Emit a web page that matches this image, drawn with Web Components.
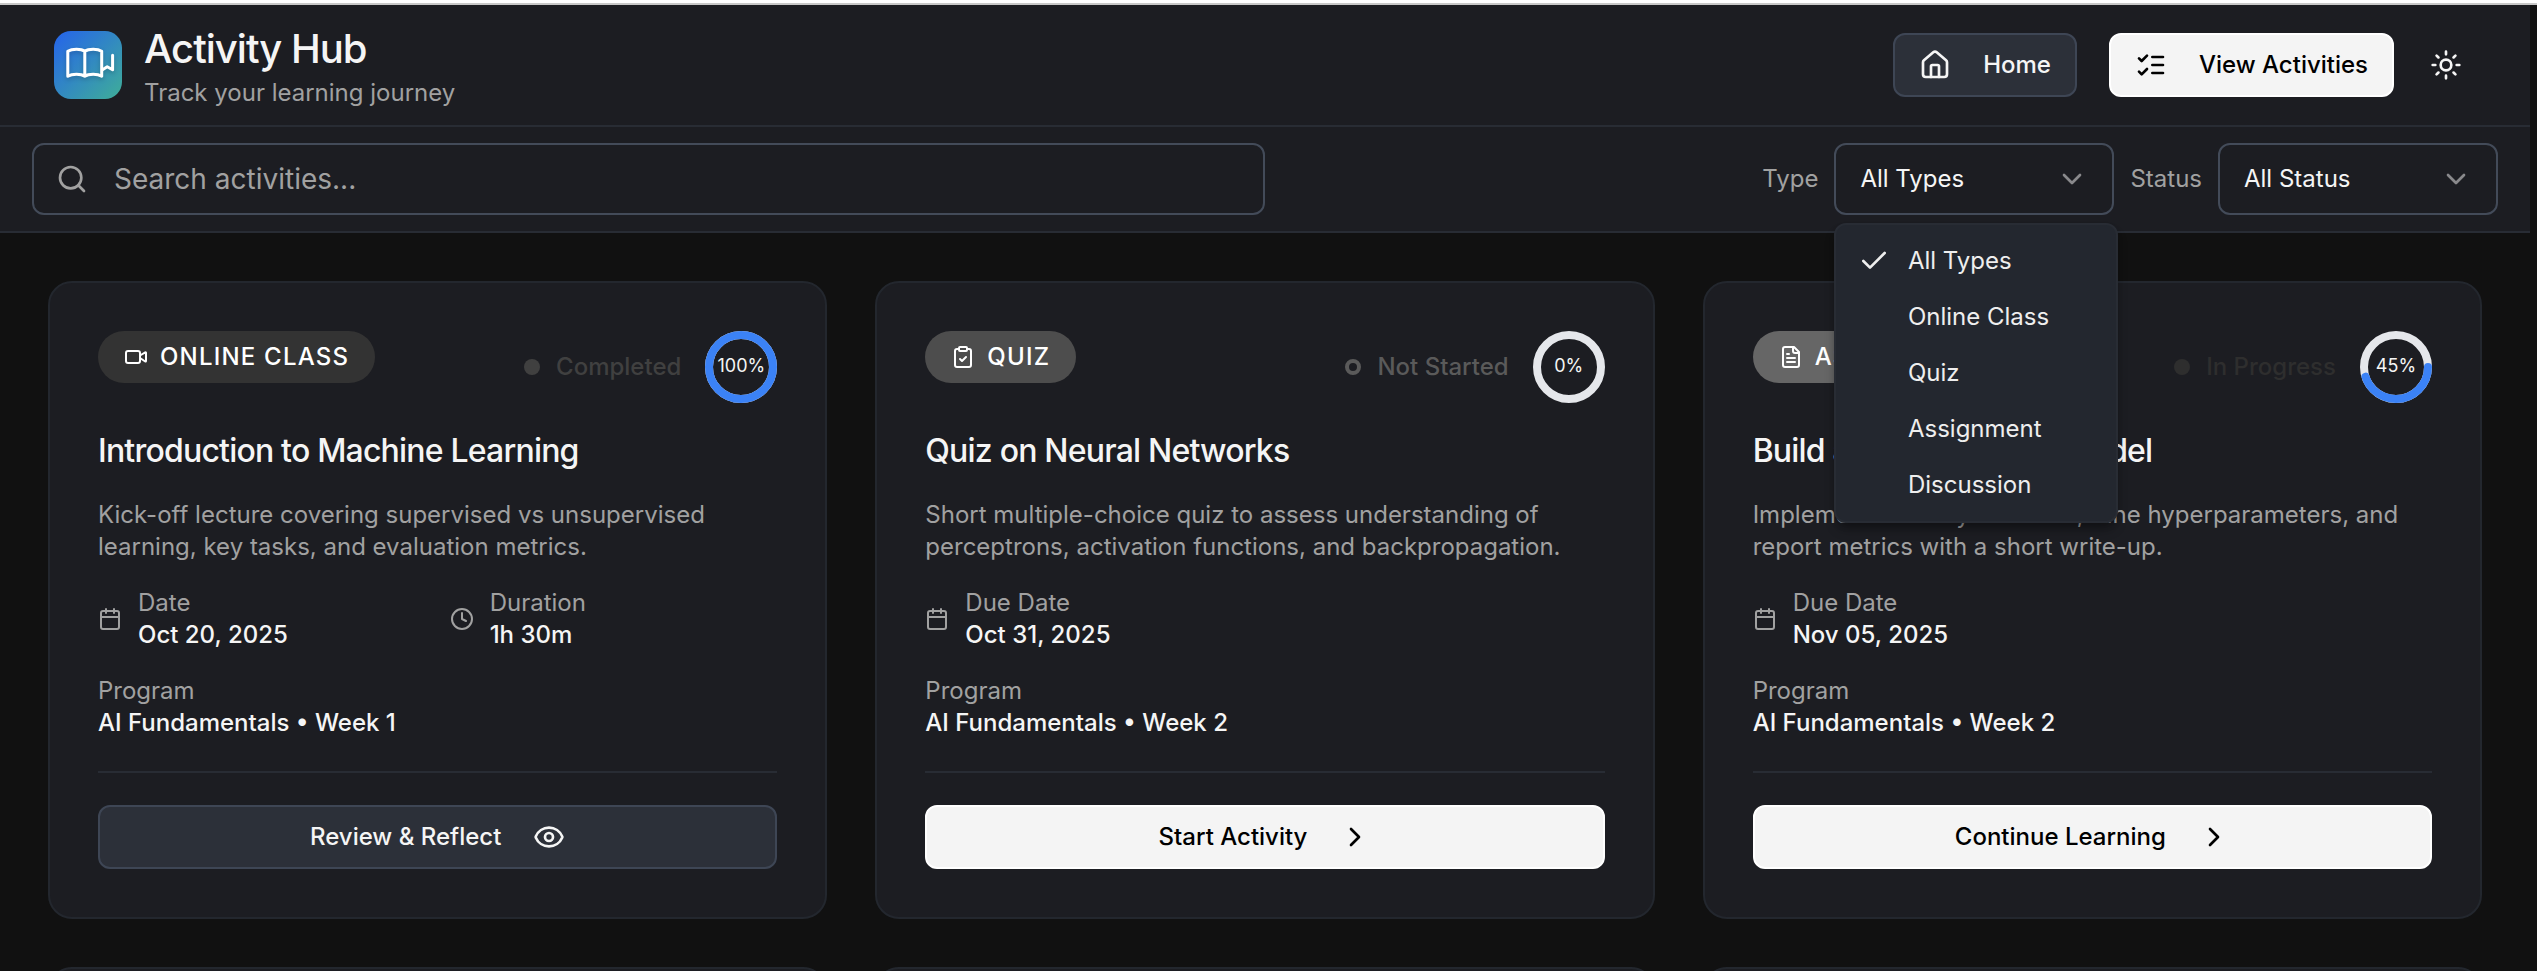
<!DOCTYPE html>
<html lang="en">
<head>
<meta charset="utf-8">
<title>Activity Hub</title>
<style>
html,body{margin:0;height:971px;overflow:hidden;background:#111;font-family:Inter,sans-serif;font-size:24px;line-height:32px;color:#f5f5f5}
</style>
</head>
<body>
<activity-hub></activity-hub>
<script>
const ICONS = {
  home:'<path d="M15 21v-8a1 1 0 0 0-1-1h-4a1 1 0 0 0-1 1v8"/><path d="M3 10a2 2 0 0 1 .709-1.528l7-5.999a2 2 0 0 1 2.582 0l7 5.999A2 2 0 0 1 21 10v9a2 2 0 0 1-2 2H5a2 2 0 0 1-2-2z"/>',
  list:'<path d="m3 17 2 2 4-4"/><path d="m3 7 2 2 4-4"/><path d="M13 6h8M13 12h8M13 18h8"/>',
  sun:'<circle cx="12" cy="12" r="4"/><path d="M12 2v2M12 20v2M4.93 4.93l1.41 1.41M17.66 17.66l1.41 1.41M2 12h2M20 12h2M6.34 17.66l-1.41 1.41M19.07 4.93l-1.41 1.41"/>',
  search:'<circle cx="11" cy="11" r="8"/><path d="m21 21-4.3-4.3"/>',
  down:'<path d="m6 9 6 6 6-6"/>',
  right:'<path d="m9 18 6-6-6-6"/>',
  check:'<path d="M20 6 9 17l-5-5"/>',
  video:'<path d="m16 13 5.223 3.482a.5.5 0 0 0 .777-.416V7.87a.5.5 0 0 0-.752-.432L16 10.5"/><rect x="2" y="6" width="14" height="12" rx="2"/>',
  clipboard:'<rect x="8" y="2" width="8" height="4" rx="1"/><path d="M16 4h2a2 2 0 0 1 2 2v14a2 2 0 0 1-2 2H6a2 2 0 0 1-2-2V6a2 2 0 0 1 2-2h2"/><path d="m9 14 2 2 4-4"/>',
  file:'<path d="M15 2H6a2 2 0 0 0-2 2v16a2 2 0 0 0 2 2h12a2 2 0 0 0 2-2V7Z"/><path d="M14 2v4a2 2 0 0 0 2 2h4M10 9H8M16 13H8M16 17H8"/>',
  calendar:'<path d="M8 2v4M16 2v4"/><rect x="3" y="4" width="18" height="18" rx="2"/><path d="M3 10h18"/>',
  clock:'<circle cx="12" cy="12" r="10"/><path d="M12 6v6l4 2"/>',
  eye:'<path d="M2.062 12.348a1 1 0 0 1 0-.696 10.75 10.75 0 0 1 19.876 0 1 1 0 0 1 0 .696 10.75 10.75 0 0 1-19.876 0"/><circle cx="12" cy="12" r="3"/>'
};
const define = (name, html) => customElements.define(name, class extends HTMLElement {
  constructor(){ super(); this.attachShadow({mode:'open'}); }
  connectedCallback(){ this.shadowRoot.innerHTML = typeof html === 'function' ? html(this) : html; }
});

define('ui-icon', el => `<style>:host{display:block;flex:none;width:${el.getAttribute('size')||32}px;height:${el.getAttribute('size')||32}px}svg{display:block;width:100%;height:100%}</style>
<svg viewBox="0 0 24 24" fill="none" stroke="currentColor" stroke-width="2" stroke-linecap="round" stroke-linejoin="round">${ICONS[el.getAttribute('name')]}</svg>`);

define('ui-button', `<style>
:host{display:flex;align-items:center;justify-content:center;gap:32px;box-sizing:border-box;height:64px;padding:0 24px;border:2px solid #3e4655;border-radius:12px;background:#2c3039;color:#f5f5f5;font-weight:500;white-space:nowrap}
:host([primary]){background:#f4f4f4;border-color:#fff;color:#000}
</style><slot></slot>`);

define('hub-logo', `<style>
:host{display:block;flex:none;width:68px;height:68px;border-radius:17px;background:linear-gradient(135deg,#2563eb,#3fae98)}
svg{display:block;filter:drop-shadow(0 2px 2px rgba(0,0,0,.2))}
</style><svg width="68" height="68" viewBox="54 31 68 68" fill="none" stroke="#fff" stroke-width="3" stroke-linecap="round" stroke-linejoin="round">
<path d="M84.8 51.3V76.2M84.8 51.3Q82 49.2 76.5 49.2 71 49.2 67.8 51.3V76.2Q71 74.2 76.5 74.2 82 74.2 84.8 76.2 87.600 74.2 93.200 74.2 98.600 74.2 101.700 76.2V51.3Q98.600 49.2 93.200 49.2 87.600 49.2 84.8 51.3"/><path d="M112.600 55.300V69.800L107.200 66.800 102.500 69.800"/></svg>`);

define('hub-header', `<style>
:host{display:flex;align-items:center;height:120px;padding:0 64px 0 54px;border-bottom:2px solid #282c34;background:#1c1d22}
.t{flex:1;margin-left:22px;padding-top:4px}
h1{margin:0 0 4px;font-size:40px;line-height:48px;font-weight:500;letter-spacing:-1px}
p{margin:0;color:#a1a1a1}
ui-button{margin-right:32px}
.sun{width:40px;display:grid;place-items:center}
</style>
<hub-logo></hub-logo><div class="t"><h1>Activity Hub</h1><p>Track your learning journey</p></div>
<ui-button><ui-icon name="home"></ui-icon><span>Home</span></ui-button>
<ui-button primary><ui-icon name="list"></ui-icon><span>View Activities</span></ui-button>
<div class="sun"><ui-icon name="sun"></ui-icon></div>`);

define('search-box', `<style>
:host{display:flex;align-items:center;box-sizing:border-box;width:50%;height:72px;padding:0 22px;gap:26px;border:2px solid #434b59;border-radius:12px;color:#a1a1a1;font-size:28px}
</style><ui-icon name="search"></ui-icon><span><slot></slot></span>`);

define('ui-select', `<style>
:host{display:flex;align-items:center;justify-content:space-between;position:relative;box-sizing:border-box;width:280px;height:72px;padding:0 24px;border:2px solid #434b59;border-radius:12px}
ui-icon{opacity:.5}
</style><span><slot></slot></span><ui-icon name="down"></ui-icon><slot name="menu"></slot>`);

define('ui-menu', `<style>
:host{position:absolute;z-index:5;left:-2px;top:78px;box-sizing:border-box;width:284px;padding:8px;border:2px solid #282c34;border-radius:12px;background:#23272f;color:#eee;box-shadow:0 8px 12px -2px rgba(0,0,0,.3),0 4px 8px -4px rgba(0,0,0,.3)}
</style><slot></slot>`);
define('ui-option', `<style>
:host{display:flex;align-items:center;height:56px;padding-left:63.5px}
:host([selected]){padding-left:14px}
ui-icon{display:none;margin-right:17.5px}
:host([selected]) ui-icon{display:block}
</style><ui-icon name="check"></ui-icon><span><slot></slot></span>`);

define('filter-bar', `<style>
:host{display:flex;align-items:center;height:104px;padding:0 32px;border-bottom:2px solid #282c34;background:#1c1d22}
.s{flex:1}.l{color:#a1a1a1;margin:0 16px}
</style>
<search-box>Search activities...</search-box><div class="s"></div>
<span class="l">Type</span>
<ui-select>All Types<ui-menu slot="menu"><ui-option selected>All Types</ui-option><ui-option>Online Class</ui-option><ui-option>Quiz</ui-option><ui-option>Assignment</ui-option><ui-option>Discussion</ui-option></ui-menu></ui-select>
<span class="l">Status</span><ui-select>All Status</ui-select>`);

define('type-badge', `<style>
:host{display:flex;align-items:center;gap:12px;box-sizing:border-box;height:52px;padding:0 26px;border-radius:26px;background:var(--badge);color:#fff;font-weight:500;letter-spacing:1.2px;white-space:nowrap}
</style><slot></slot>`);

define('progress-ring', el => { const v=+el.getAttribute('value'), c=2*Math.PI*32; return `<style>
:host{display:grid;place-items:center;flex:none;width:72px;height:72px;font-size:18px;line-height:24px;font-weight:400}
svg,span{grid-area:1/1}span{margin-top:-3px}
</style><svg width="72" height="72" fill="none" stroke-width="8"><circle cx="36" cy="36" r="32" stroke="#e5e7eb"/>${v?`<circle cx="36" cy="36" r="32" stroke="#3b82f6" stroke-linecap="round" stroke-dasharray="${c*v/100} ${c}"/>`:''}</svg><span>${v}%</span>`; });

define('meta-item', el => `<style>
:host{display:flex;align-items:center;gap:16px;color:#a1a1a1}b{display:block;font-weight:500;color:#f5f5f5}
</style>${el.getAttribute('icon')?`<ui-icon size="24" name="${el.getAttribute('icon')}"></ui-icon>`:''}<div>${el.getAttribute('label')}<b><slot></slot></b></div>`);

define('activity-card', el => { const a=n=>el.getAttribute(n); return `<style>
:host{display:block;box-sizing:border-box;height:638px;padding:48px;border:2px solid #23272e;border-radius:24px;background:#1c1d22;min-width:0}
.top{display:flex;align-items:flex-start;height:72px}
.st{display:flex;align-items:center;height:72px;margin:0 24px 0 auto;gap:16px;font-weight:500;color:${a('tone')}}
.dot{box-sizing:border-box;width:16px;height:16px;border-radius:50%;${a('value')==='0'?'border:4px solid':'background:'+a('tone')}}
h2{margin:24px 0;font-size:32px;line-height:48px;font-weight:500;letter-spacing:-.8px;white-space:nowrap}
p{margin:0;color:#a1a1a1;white-space:nowrap}
.grid{display:grid;grid-template-columns:1fr 1fr;gap:24px;margin:24px 0}
.foot{margin-top:32px;padding-top:32px;border-top:2px solid #282c34}
</style>
<div class="top"><type-badge style="--badge:${a('shade')}"><ui-icon size="24" name="${a('icon')}"></ui-icon><span>${a('kind')}</span></type-badge>
<div class="st"><i class="dot"></i><span>${a('status')}</span></div><progress-ring value="${a('value')}"></progress-ring></div>
<h2>${a('heading')}</h2><p><slot></slot></p>
<div class="grid"><meta-item icon="calendar" label="${a('datelabel')}">${a('date')}</meta-item>${a('duration')?`<meta-item icon="clock" label="Duration">${a('duration')}</meta-item>`:''}</div>
<meta-item label="Program">AI Fundamentals • ${a('week')}</meta-item>
<div class="foot"><ui-button ${a('value')==='100'?'':'primary'}><span>${a('action')}</span><ui-icon name="${a('value')==='100'?'eye':'right'}"></ui-icon></ui-button></div>`; });

define('card-shell', `<style>:host{display:block;box-sizing:border-box;height:638px;border:2px solid #23272e;border-radius:24px;background:#1c1d22}</style>`);

define('activity-hub', `<style>
:host{display:block;height:971px;overflow:hidden;background:#111}
.edge{height:3px;background:#fff;border-bottom:2px solid #c8c8c8}
.page{width:2530px}
.cards{display:grid;grid-template-columns:repeat(3,minmax(0,1fr));gap:48px;padding:48px}
filter-bar{position:relative;z-index:2}
</style>
<div class="edge"></div><div class="page"><hub-header></hub-header><filter-bar></filter-bar>
<div class="cards">
<activity-card kind="ONLINE CLASS" icon="video" shade="#333" status="Completed" tone="#404040" value="100" heading="Introduction to Machine Learning" datelabel="Date" date="Oct 20, 2025" duration="1h 30m" week="Week 1" action="Review &amp; Reflect">Kick-off lecture covering supervised vs unsupervised<br>learning, key tasks, and evaluation metrics.</activity-card>
<activity-card kind="QUIZ" icon="clipboard" shade="#4d4d4d" status="Not Started" tone="#5a5a5a" value="0" heading="Quiz on Neural Networks" datelabel="Due Date" date="Oct 31, 2025" week="Week 2" action="Start Activity">Short multiple-choice quiz to assess understanding of<br>perceptrons, activation functions, and backpropagation.</activity-card>
<activity-card kind="ASSIGNMENT" icon="file" shade="#666" status="In Progress" tone="#2e2e2e" value="45" heading="Build a Classification Model" datelabel="Due Date" date="Nov 05, 2025" week="Week 2" action="Continue Learning">Implement a binary classifier, tune hyperparameters, and<br>report metrics with a short write-up.</activity-card>
<card-shell></card-shell><card-shell></card-shell><card-shell></card-shell>
</div></div>`);
</script>
</body>
</html>
